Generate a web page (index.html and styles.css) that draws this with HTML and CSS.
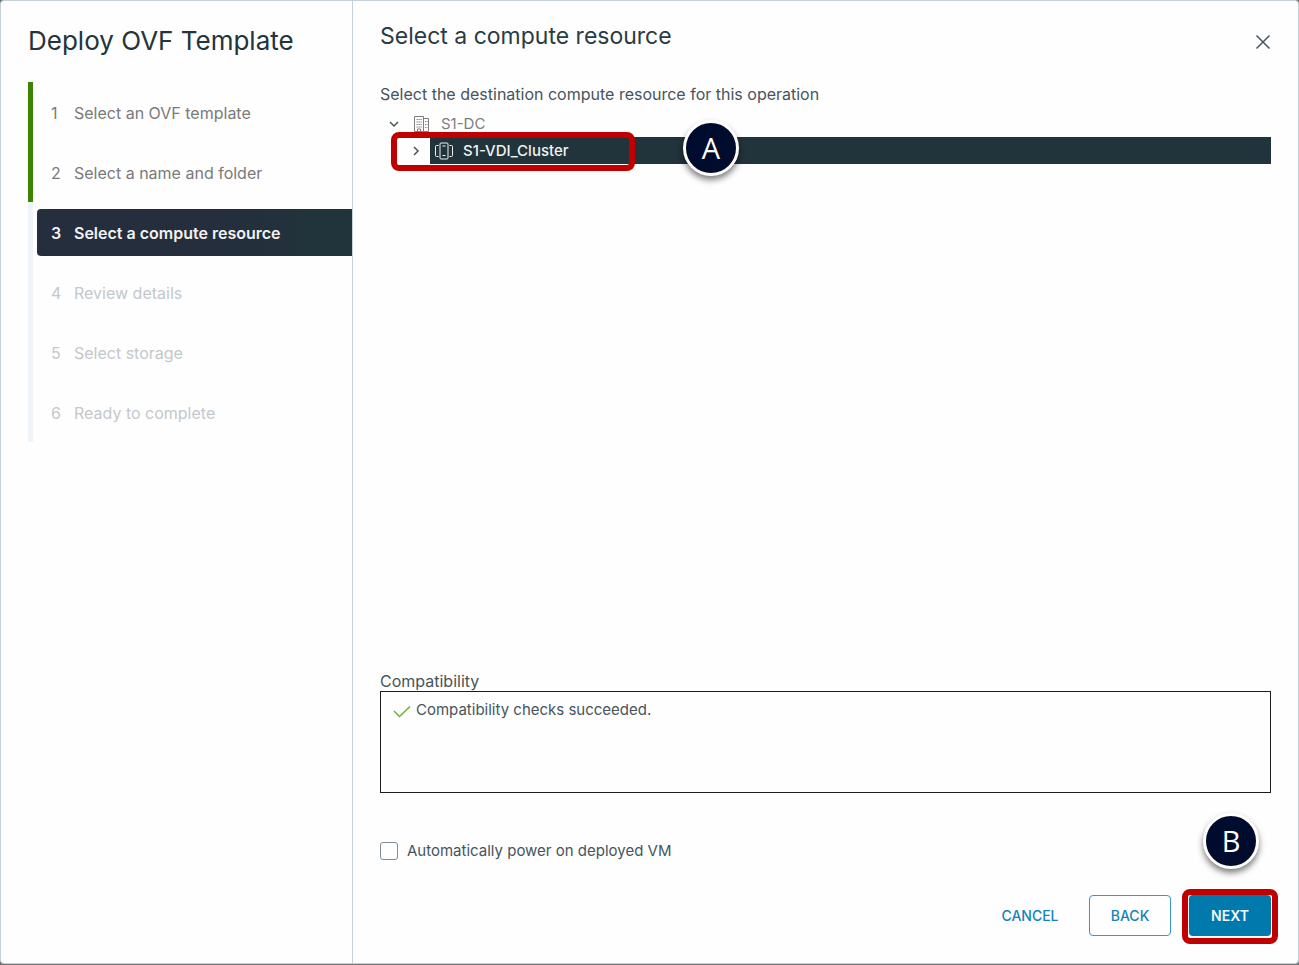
FILE: index.html
```html
<!DOCTYPE html>
<html lang="en">
<head>
    <meta charset="UTF-8">
    <meta name="viewport" content="width=device-width, initial-scale=1.0">
    <title>Deploy OVF Template</title>
    <link rel="stylesheet" href="styles.css">
</head>
<body>
    <div class="wizard">
        <nav class="sidebar">
            <h1>Deploy OVF Template</h1>
            <ol class="steps">
                <li class="step done"><button type="button"><span class="num">1</span>Select an OVF template</button></li>
                <li class="step done"><button type="button"><span class="num">2</span>Select a name and folder</button></li>
                <li class="step active"><button type="button" aria-current="step"><span class="num">3</span>Select a compute resource</button></li>
                <li class="step"><button type="button" disabled><span class="num">4</span>Review details</button></li>
                <li class="step"><button type="button" disabled><span class="num">5</span>Select storage</button></li>
                <li class="step"><button type="button" disabled><span class="num">6</span>Ready to complete</button></li>
            </ol>
        </nav>

        <main class="content">
            <header class="content-header">
                <h2>Select a compute resource</h2>
                <button type="button" class="close" aria-label="Close">
                    <svg width="16" height="16" viewBox="0 0 16 16"><path d="M1.5 1.5l13 13M14.5 1.5l-13 13"/></svg>
                </button>
            </header>

            <p class="hint">Select the destination compute resource for this operation</p>

            <ul class="tree">
                <li>
                    <div class="tree-row">
                        <button type="button" class="toggle" aria-label="Collapse S1-DC">
                            <svg width="10" height="10" viewBox="0 0 10 10"><path d="M1 3l4 4 4-4"/></svg>
                        </button>
                        <a href="#" class="node">
                            <svg class="node-icon" width="18" height="18" viewBox="0 0 18 18">
                                <path d="M1.5 16.5v-15h9v15zM10.5 3.500h5v13h-5M4.500 16.500v-2.500h3v2.500"/>
                                <path d="M3.500 4.500h6M3.500 7h6M3.500 9.500h6M3.500 12h6M12 6.500h2.500M12 9.500h2.500M12 12.500h2.500" stroke-dasharray="1.300 .7"/>
                            </svg>
                            S1-DC
                        </a>
                    </div>
                    <ul class="tree-children">
                        <li class="tree-row selected">
                            <button type="button" class="toggle" aria-label="Expand S1-VDI_Cluster">
                                <svg width="10" height="10" viewBox="0 0 10 10"><path d="M3 1l4 4-4 4"/></svg>
                            </button>
                            <a href="#" class="node">
                                <svg class="node-icon" width="18" height="18" viewBox="0 0 18 18">
                                    <rect x="5" y="1" width="8" height="16" rx="1"/>
                                    <path d="M7.500 4h3M7.500 13.500h3M3.500 3.500h-2a1 1 0 0 0-1 1v9a1 1 0 0 0 1 1h2M14.500 3.500h2a1 1 0 0 1 1 1v9a1 1 0 0 1-1 1h-2"/>
                                </svg>
                                S1-VDI_Cluster
                            </a>
                            <span class="outline outline-row"></span>
                            <span class="badge badge-a">A</span>
                        </li>
                    </ul>
                </li>
            </ul>

            <section class="compat">
                <h3>Compatibility</h3>
                <div class="compat-box">
                    <svg width="18" height="18" viewBox="0 0 18 18"><path d="M1 9l5.500 5.500L17 4.500"/></svg>
                    <span>Compatibility checks succeeded.</span>
                </div>
            </section>

            <div class="power">
                <input type="checkbox" id="power-on">
                <label for="power-on">Automatically power on deployed VM</label>
            </div>

            <footer class="actions">
                <button type="button" class="btn btn-link">CANCEL</button>
                <button type="button" class="btn btn-outline">BACK</button>
                <div class="next-wrap">
                    <button type="button" class="btn btn-primary">NEXT</button>
                    <span class="outline outline-next"></span>
                    <span class="badge badge-b">B</span>
                </div>
            </footer>
        </main>
    </div>
</body>
</html>
```
FILE: styles.css
```css
* {
    box-sizing: border-box;
}

body {
    margin: 0;
    padding-bottom: 1px;
    min-height: 100vh;
    display: flex;
    background: #70757a;
    font-family: Inter, "Liberation Sans", sans-serif;
    font-size: 15px;
    line-height: 20px;
    color: #46555c;
}

h1, h2, h3, p, ul, ol {
    margin: 0;
    padding: 0;
    font-weight: 400;
    list-style: none;
}

button {
    font: inherit;
    color: inherit;
    background: none;
    border: none;
    padding: 0;
    cursor: pointer;
}

svg {
    display: block;
    flex: none;
    fill: none;
    stroke: currentColor;
}

.wizard {
    flex: 1;
    display: flex;
    background: #fefefe;
    border: 1px solid #c5d1d8;
    border-radius: 4px;
}

/* step list */
.sidebar {
    width: 352px;
    flex: none;
    padding: 24px 0 0 27px;
    border-right: 1px solid #c5d1d8;
}

.sidebar h1 {
    font-size: 26px;
    line-height: 32px;
    color: #22343c;
}

.steps {
    margin-top: 25px;
    font-size: 16px;
}

.step {
    height: 60px;
    padding: 7px 0 6px 4px;
    border-left: 5px solid #eef4f7;
}

.step.done {
    border-left-color: #3c8500;
}

.step button {
    display: flex;
    align-items: center;
    width: 100%;
    height: 47px;
    padding-left: 14px;
    border-radius: 4px 0 0 4px;
    color: #c3c8cb;
    text-align: left;
}

.step .num {
    width: 23px;
}

.step.done button {
    color: #7a7a7a;
}

.step.active button {
    background: linear-gradient(to right, #242e3c 60%, #21333b 85%);
    color: #f2f2f2;
    font-weight: 600;
}

/* right pane */
.content {
    flex: 1;
    min-width: 0;
    display: flex;
    flex-direction: column;
    padding: 20px 27px 27px;
}

.content-header {
    display: flex;
    justify-content: space-between;
}

.content-header h2 {
    font-size: 23px;
    line-height: 30px;
    color: #2b3b43;
}

.close {
    height: 42px;
    color: #46555c;
}

.close svg {
    stroke-width: 1.5;
}

.hint {
    margin-top: 21px;
    font-size: 16px;
}

.tree {
    flex: 1;
    min-height: 100px;
    margin-top: 6px;
}

.tree-row {
    position: relative;
    display: flex;
    height: 27px;
}

.tree-children {
    padding-left: 22px;
}

.toggle {
    display: flex;
    align-items: center;
    justify-content: center;
    width: 28px;
}

.toggle svg {
    stroke-width: 1.5;
}

.node {
    flex: 1;
    display: flex;
    align-items: center;
    gap: 10px;
    padding-left: 5px;
    color: #7d7d7d;
    text-decoration: none;
}

.selected .node {
    padding-top: 1px;
    background: #21333b;
    color: #f2f2f2;
    font-weight: 500;
}

.compat h3 {
    font-size: 16px;
}

.compat-box {
    display: flex;
    align-items: flex-start;
    gap: 5px;
    height: 102px;
    padding: 8px 12px;
    border: 1px solid #1c1c1c;
}

.compat-box svg {
    margin-top: 2px;
    color: #62b12f;
    stroke-width: 1.4;
}

.power {
    display: flex;
    align-items: center;
    gap: 9px;
    margin-top: 48px;
}

.power input {
    appearance: none;
    width: 18px;
    height: 18px;
    margin: 0;
    border: 1px solid #7b8d96;
    border-radius: 3px;
    background: #fff;
}

.power input:checked {
    background: #0079ad;
}

.actions {
    display: flex;
    justify-content: flex-end;
    gap: 18px;
    margin-top: 34px;
}

.btn {
    min-width: 82px;
    height: 41px;
    border-radius: 4px;
    font-size: 14px;
    font-weight: 500;
    color: #1583b4;
}

.btn-outline {
    border: 1px solid #3a97c2;
}

.btn-primary {
    background: #0079ad;
    color: #f4fafc;
    font-weight: 600;
}

.next-wrap {
    position: relative;
}

/* callouts drawn over the dialog */
.outline {
    position: absolute;
    border: 6px solid #c00000;
    border-radius: 8px;
    pointer-events: none;
}

.outline-row {
    top: -5px;
    left: -11px;
    width: 244px;
    height: 39px;
}

.outline-next {
    inset: -6px -7px -8px;
}

.badge {
    position: absolute;
    display: flex;
    align-items: center;
    justify-content: center;
    width: 56px;
    height: 56px;
    border: 3px solid #fff;
    border-radius: 50%;
    background: #000c2e;
    box-shadow: 0 4px 6px rgba(0, 0, 0, 0.5);
    color: #fff;
    font: 400 29px/32px "Open Sans", "Noto Sans", sans-serif;
}

.badge-a {
    top: -17px;
    left: 281px;
}

.badge-b {
    top: -82px;
    left: 14px;
}
```
